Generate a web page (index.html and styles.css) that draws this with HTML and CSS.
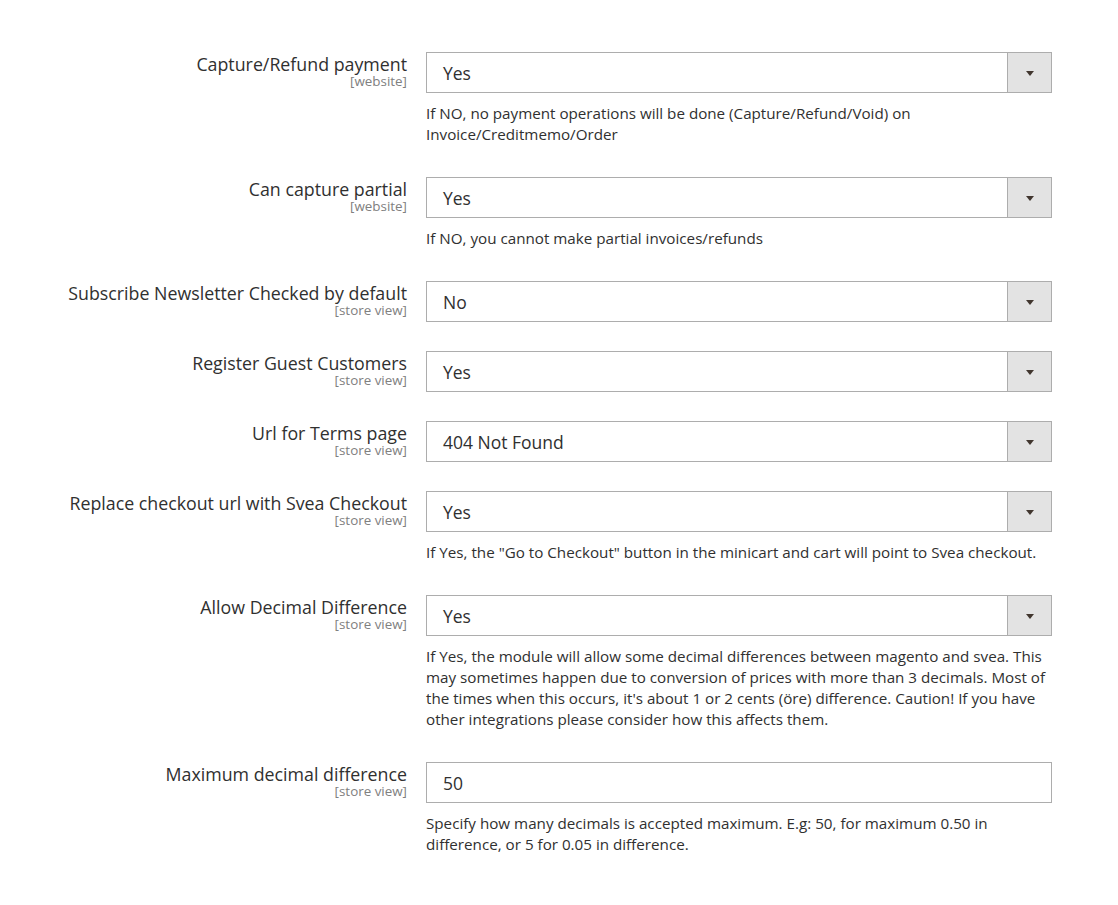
FILE: index.html
```html
<!DOCTYPE html>
<html>
<head>
<meta charset="utf-8">
<link rel="stylesheet" href="styles.css">
</head>
<body>
<div class="config">
  <div class="row">
    <div class="label"><span class="title">Capture/Refund payment</span><span class="scope">[website]</span></div>
    <div class="value">
      <div class="select"><span class="select-text">Yes</span><span class="arrow"></span></div>
      <p class="note">If NO, no payment operations will be done (Capture/Refund/Void) on Invoice/Creditmemo/Order</p>
    </div>
  </div>
  <div class="row">
    <div class="label"><span class="title">Can capture partial</span><span class="scope">[website]</span></div>
    <div class="value">
      <div class="select"><span class="select-text">Yes</span><span class="arrow"></span></div>
      <p class="note">If NO, you cannot make partial invoices/refunds</p>
    </div>
  </div>
  <div class="row">
    <div class="label"><span class="title">Subscribe Newsletter Checked by default</span><span class="scope">[store view]</span></div>
    <div class="value">
      <div class="select"><span class="select-text">No</span><span class="arrow"></span></div>
    </div>
  </div>
  <div class="row">
    <div class="label"><span class="title">Register Guest Customers</span><span class="scope">[store view]</span></div>
    <div class="value">
      <div class="select"><span class="select-text">Yes</span><span class="arrow"></span></div>
    </div>
  </div>
  <div class="row">
    <div class="label"><span class="title">Url for Terms page</span><span class="scope">[store view]</span></div>
    <div class="value">
      <div class="select"><span class="select-text">404 Not Found</span><span class="arrow"></span></div>
    </div>
  </div>
  <div class="row">
    <div class="label"><span class="title">Replace checkout url with Svea Checkout</span><span class="scope">[store view]</span></div>
    <div class="value">
      <div class="select"><span class="select-text">Yes</span><span class="arrow"></span></div>
      <p class="note">If Yes, the "Go to Checkout" button in the minicart and cart will point to Svea checkout.</p>
    </div>
  </div>
  <div class="row">
    <div class="label"><span class="title">Allow Decimal Difference</span><span class="scope">[store view]</span></div>
    <div class="value">
      <div class="select"><span class="select-text">Yes</span><span class="arrow"></span></div>
      <p class="note">If Yes, the module will allow some decimal differences between magento and svea. This may sometimes happen due to conversion of prices with more than 3 decimals. Most of the times when this occurs, it's about 1 or 2 cents (öre) difference. Caution! If you have other integrations please consider how this affects them.</p>
    </div>
  </div>
  <div class="row">
    <div class="label"><span class="title">Maximum decimal difference</span><span class="scope">[store view]</span></div>
    <div class="value">
      <div class="input">50</div>
      <p class="note">Specify how many decimals is accepted maximum. E.g: 50, for maximum 0.50 in difference, or 5 for 0.05 in difference.</p>
    </div>
  </div>
</div>
</body>
</html>
```
FILE: styles.css
```css
html, body {
  margin: 0;
  padding: 0;
  background: #ffffff;
}
body {
  font-family: "Open Sans", "Liberation Sans", sans-serif;
  color: #303030;
}
.config {
  padding-top: 52px;
  display: flex;
  flex-direction: column;
}
.row {
  display: grid;
  grid-template-columns: 407px 626px;
  column-gap: 19px;
  margin-bottom: 29px;
}
.label {
  display: flex;
  flex-direction: column;
  align-items: flex-end;
  text-align: right;
  padding-top: 2px;
}
.title {
  font-size: 17.8px;
  line-height: 20px;
  color: #303030;
}
.scope {
  font-size: 13.4px;
  line-height: 14px;
  color: #808080;
}
.select, .input {
  box-sizing: border-box;
  height: 41px;
  border: 1px solid #adadad;
  display: flex;
  align-items: center;
  font-size: 17.5px;
  color: #303030;
  background: #fff;
}
.select-text {
  flex: 1;
  padding-left: 16px;
}
.input {
  padding-left: 16px;
}
.arrow {
  width: 43px;
  align-self: stretch;
  background: #e3e3e3;
  border-left: 1px solid #adadad;
  position: relative;
}
.arrow::after {
  content: "";
  position: absolute;
  left: 50%;
  top: 50%;
  margin-left: -4px;
  margin-top: -2px;
  border-left: 4px solid transparent;
  border-right: 4px solid transparent;
  border-top: 5px solid #41362f;
}
.note {
  margin: 10px 0 3px;
  font-size: 15.2px;
  line-height: 21px;
  color: #303030;
}
```
